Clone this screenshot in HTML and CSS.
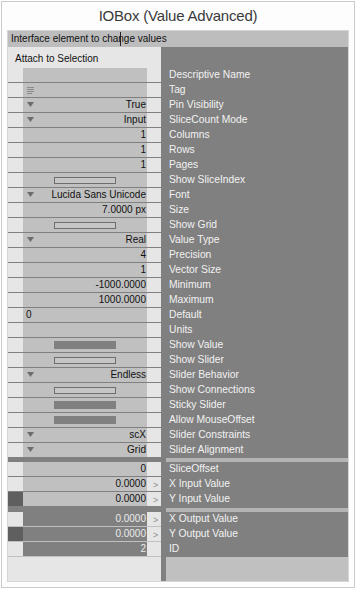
FILE: index.html
```html
<!DOCTYPE html>
<html lang="en">
<head>
    <meta charset="UTF-8">
    <meta name="viewport" content="width=device-width, initial-scale=1.0">
    <title>IOBox (Value Advanced)</title>
    <link rel="stylesheet" href="styles.css">
</head>
<body>
    <div class="window">
        <!-- Title -->
        <div class="title">IOBox (Value Advanced)</div>

        <div class="panel">
            <div class="panel-head">Interface element to change values<span class="caret"></span></div>

            <div class="panel-body">
                <!-- Values -->
                <div class="values">
                    <div class="attach">Attach to Selection</div>

                    <div class="row"><div class="cell-l"></div><div class="cell-v"></div><div class="cell-r"></div></div>
                    <div class="row"><div class="cell-l"></div><div class="cell-v">
                        <svg class="icon" width="7" height="7" viewBox="0 0 7 7"><path d="M0 0.5H7M0 2.5H7M0 4.5H7M0 6.5H5" stroke="#8a8a8a" stroke-width="1"/></svg>
                    </div><div class="cell-r"></div></div>
                    <div class="row"><div class="cell-l"></div><div class="cell-v"><svg class="icon" width="7" height="5" viewBox="0 0 7 5"><path d="M0 0H7L3.5 5Z" fill="#6c6c6c"/></svg><span class="num">True</span></div><div class="cell-r"></div></div>
                    <div class="row"><div class="cell-l"></div><div class="cell-v"><svg class="icon" width="7" height="5" viewBox="0 0 7 5"><path d="M0 0H7L3.5 5Z" fill="#6c6c6c"/></svg><span class="num">Input</span></div><div class="cell-r"></div></div>
                    <div class="row"><div class="cell-l"></div><div class="cell-v"><span class="num">1</span></div><div class="cell-r"></div></div>
                    <div class="row"><div class="cell-l"></div><div class="cell-v"><span class="num">1</span></div><div class="cell-r"></div></div>
                    <div class="row"><div class="cell-l"></div><div class="cell-v"><span class="num">1</span></div><div class="cell-r"></div></div>
                    <div class="row"><div class="cell-l"></div><div class="cell-v"><div class="toggle"></div></div><div class="cell-r"></div></div>
                    <div class="row"><div class="cell-l"></div><div class="cell-v"><svg class="icon" width="7" height="5" viewBox="0 0 7 5"><path d="M0 0H7L3.5 5Z" fill="#6c6c6c"/></svg><span class="num">Lucida Sans Unicode</span></div><div class="cell-r"></div></div>
                    <div class="row"><div class="cell-l"></div><div class="cell-v"><span class="num">7.0000 px</span></div><div class="cell-r"></div></div>
                    <div class="row"><div class="cell-l"></div><div class="cell-v"><div class="toggle"></div></div><div class="cell-r"></div></div>
                    <div class="row"><div class="cell-l"></div><div class="cell-v"><svg class="icon" width="7" height="5" viewBox="0 0 7 5"><path d="M0 0H7L3.5 5Z" fill="#6c6c6c"/></svg><span class="num">Real</span></div><div class="cell-r"></div></div>
                    <div class="row"><div class="cell-l"></div><div class="cell-v"><span class="num">4</span></div><div class="cell-r"></div></div>
                    <div class="row"><div class="cell-l"></div><div class="cell-v"><span class="num">1</span></div><div class="cell-r"></div></div>
                    <div class="row"><div class="cell-l"></div><div class="cell-v"><span class="num">-1000.0000</span></div><div class="cell-r"></div></div>
                    <div class="row"><div class="cell-l"></div><div class="cell-v"><span class="num">1000.0000</span></div><div class="cell-r"></div></div>
                    <div class="row"><div class="cell-l"></div><div class="cell-v"><span class="str">0</span></div><div class="cell-r"></div></div>
                    <div class="row"><div class="cell-l"></div><div class="cell-v"></div><div class="cell-r"></div></div>
                    <div class="row"><div class="cell-l"></div><div class="cell-v"><div class="toggle on"></div></div><div class="cell-r"></div></div>
                    <div class="row"><div class="cell-l"></div><div class="cell-v"><div class="toggle"></div></div><div class="cell-r"></div></div>
                    <div class="row"><div class="cell-l"></div><div class="cell-v"><svg class="icon" width="7" height="5" viewBox="0 0 7 5"><path d="M0 0H7L3.5 5Z" fill="#6c6c6c"/></svg><span class="num">Endless</span></div><div class="cell-r"></div></div>
                    <div class="row"><div class="cell-l"></div><div class="cell-v"><div class="toggle"></div></div><div class="cell-r"></div></div>
                    <div class="row"><div class="cell-l"></div><div class="cell-v"><div class="toggle on"></div></div><div class="cell-r"></div></div>
                    <div class="row"><div class="cell-l"></div><div class="cell-v"><div class="toggle on"></div></div><div class="cell-r"></div></div>
                    <div class="row"><div class="cell-l"></div><div class="cell-v"><svg class="icon" width="7" height="5" viewBox="0 0 7 5"><path d="M0 0H7L3.5 5Z" fill="#6c6c6c"/></svg><span class="num">scX</span></div><div class="cell-r"></div></div>
                    <div class="row"><div class="cell-l"></div><div class="cell-v"><svg class="icon" width="7" height="5" viewBox="0 0 7 5"><path d="M0 0H7L3.5 5Z" fill="#6c6c6c"/></svg><span class="num">Grid</span></div><div class="cell-r"></div></div>

                    <div class="band"></div>

                    <!-- Inputs -->
                    <div class="row"><div class="cell-l"></div><div class="cell-v"><span class="num">0</span></div><div class="cell-r"></div></div>
                    <div class="row"><div class="cell-l"></div><div class="cell-v"><span class="num">0.0000</span></div><div class="cell-r">&gt;</div></div>
                    <div class="row"><div class="cell-l dark"></div><div class="cell-v"><span class="num">0.0000</span></div><div class="cell-r">&gt;</div></div>

                    <div class="band wide"></div>

                    <!-- Outputs -->
                    <div class="row out"><div class="cell-l"></div><div class="cell-v"><span class="num">0.0000</span></div><div class="cell-r">&gt;</div></div>
                    <div class="row out"><div class="cell-l dark"></div><div class="cell-v"><span class="num">0.0000</span></div><div class="cell-r">&gt;</div></div>
                    <div class="row out"><div class="cell-l"></div><div class="cell-v"><span class="num">2</span></div><div class="cell-r"></div></div>

                    <div class="rest"></div>
                </div>

                <!-- Pin names -->
                <div class="names">
                    <div class="strip"></div>
                    <div class="labels">
                        <div class="spacer"></div>
                        <div class="label">Descriptive Name</div>
                        <div class="label">Tag</div>
                        <div class="label">Pin Visibility</div>
                        <div class="label">SliceCount Mode</div>
                        <div class="label">Columns</div>
                        <div class="label">Rows</div>
                        <div class="label">Pages</div>
                        <div class="label">Show SliceIndex</div>
                        <div class="label">Font</div>
                        <div class="label">Size</div>
                        <div class="label">Show Grid</div>
                        <div class="label">Value Type</div>
                        <div class="label">Precision</div>
                        <div class="label">Vector Size</div>
                        <div class="label">Minimum</div>
                        <div class="label">Maximum</div>
                        <div class="label">Default</div>
                        <div class="label">Units</div>
                        <div class="label">Show Value</div>
                        <div class="label">Show Slider</div>
                        <div class="label">Slider Behavior</div>
                        <div class="label">Show Connections</div>
                        <div class="label">Sticky Slider</div>
                        <div class="label">Allow MouseOffset</div>
                        <div class="label">Slider Constraints</div>
                        <div class="label">Slider Alignment</div>
                        <div class="stripe"></div>
                        <div class="label">SliceOffset</div>
                        <div class="label">X Input Value</div>
                        <div class="label">Y Input Value</div>
                        <div class="stripe wide"></div>
                        <div class="label">X Output Value</div>
                        <div class="label">Y Output Value</div>
                        <div class="label">ID</div>
                        <div class="rest"></div>
                    </div>
                </div>
            </div>
        </div>
    </div>
</body>
</html>
```

FILE: styles.css
```css
/* Page */
body {
    margin: 0;
    background: #fff;
    font-family: "Liberation Sans", Arial, sans-serif;
    font-size: 10px;
    color: #111;
}
.window {
    margin: 1px 0 0 1px;
    width: 354px;
    height: 587px;
    box-sizing: border-box;
    border: 1px solid #cbcbcb;
    background: #fdfdfd;
}
.title {
    height: 28px;
    line-height: 28px;
    text-align: center;
    font-size: 15px;
    letter-spacing: -0.2px;
    color: #3a3a3a;
}

/* Panel */
.panel {
    margin-left: 5px;
    width: 342px;
    height: 552px;
    box-sizing: border-box;
    border: 1px solid #d5d5d5;
    display: flex;
    flex-direction: column;
}
.panel-head {
    position: relative;
    height: 16px;
    line-height: 16px;
    padding-left: 3px;
    background: #bdbdbd;
}
.caret {
    position: absolute;
    left: 112px;
    top: 1px;
    width: 1px;
    height: 14px;
    background: #222;
}
.panel-body {
    flex: 1;
    display: flex;
}

/* Values column */
.values {
    width: 153px;
    background: #e6e6e6;
    display: flex;
    flex-direction: column;
}
.attach {
    height: 21px;
    box-sizing: border-box;
    padding: 5px 0 0 7px;
    line-height: 14px;
    flex-shrink: 0;
}
.row {
    display: flex;
    height: 14px;
    line-height: 14px;
    border-bottom: 1px solid #808080;
    flex-shrink: 0;
}
.cell-l {
    width: 15px;
}
.cell-l.dark {
    background: #5f5f5f;
}
.cell-v {
    width: 124px;
    display: flex;
    align-items: flex-start;
    background: #c0c0c0;
    white-space: nowrap;
}
.cell-r {
    width: 14px;
    box-sizing: border-box;
    padding: 1px 0 0 6px;
    line-height: 14px;
    font-size: 9px;
    color: #8e8e8e;
}
.num {
    margin-left: auto;
    padding-right: 1px;
}
.str {
    padding-left: 3px;
}
.icon {
    display: block;
    margin: 4px 0 0 4px;
}
.toggle {
    width: 62px;
    height: 7px;
    margin: 4px auto 0;
    box-sizing: border-box;
    border: 1px solid #6e6e6e;
    background: #c6c6c6;
}
.toggle.on {
    height: 8px;
    margin-top: 3px;
    border-color: #808080;
    background: #808080;
}
.band {
    height: 4px;
    background: #808080;
    flex-shrink: 0;
}
.band.wide {
    height: 5px;
}
.row.out {
    border-bottom-color: #c0c0c0;
}
.row.out .cell-v {
    background: #808080;
    color: #ececec;
}
.values .rest {
    flex: 1;
}

/* Names column */
.names {
    flex: 1;
    display: flex;
    background: #808080;
}
.strip {
    width: 5px;
}
.labels {
    flex: 1;
    display: flex;
    flex-direction: column;
    color: #f2f2f2;
}
.spacer {
    height: 21px;
    flex-shrink: 0;
}
.label {
    height: 15px;
    line-height: 14px;
    padding-left: 3px;
    font-size: 10.3px;
    white-space: nowrap;
    flex-shrink: 0;
}
.stripe {
    height: 4px;
    background: #b4b4b4;
    flex-shrink: 0;
}
.stripe.wide {
    margin-top: 1px;
}
.labels .rest {
    flex: 1;
    background: #c0c0c0;
}
```
